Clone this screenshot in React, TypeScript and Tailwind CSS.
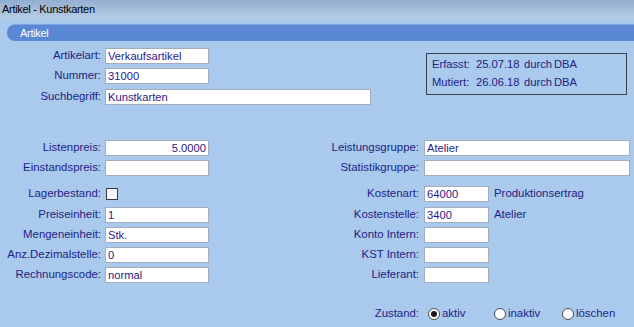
import type { ReactNode } from 'react';

const font = { fontFamily: '"Liberation Sans", Arial, sans-serif' };

function Field({ value = '', w, right = false }: { value?: string; w: string; right?: boolean }) {
    return (
        <div
            className={`${w} h-[16px] bg-white border border-[#a3adbd] px-[2px] text-[11.2px] leading-[14px] text-[#2c1a86] whitespace-nowrap overflow-hidden ${right ? 'text-right' : ''}`}
        >
            {value}
        </div>
    );
}

function Row({ label, lw, gap, children, mt }: { label: string; lw: string; gap: string; children: ReactNode; mt: string }) {
    return (
        <div className={`flex items-center h-[16px] ${mt}`}>
            <div className={`${lw} ${gap} text-right text-[11.4px] text-[#1d2383] whitespace-nowrap`}>{label}</div>
            {children}
        </div>
    );
}

function Radio({ checked = false, label }: { checked?: boolean; label: string }) {
    return (
        <div className="flex items-center">
            <span className="w-[12px] h-[12px] rounded-full bg-white border border-[#4a4a4a] flex items-center justify-center">
                {checked && <span className="w-[6px] h-[6px] rounded-full bg-[#1a1a1a]" />}
            </span>
            <span className="ml-[2px] text-[11.4px] text-[#1d2383]">{label}</span>
        </div>
    );
}

export default function App() {
    return (
        <div className="w-[634px] h-[327px] bg-[#a9c9ed] overflow-hidden" style={font}>
            <div className="h-[19px] bg-gradient-to-b from-[#93aed0] to-[#b6cde6] px-[2px] flex items-center">
                <span className="text-[11px] tracking-[-0.3px] text-black">Artikel - Kunstkarten</span>
            </div>

            <div className="mt-[5px] ml-[7px] -mr-[10px] h-[17px] bg-[#5b88d4] border-t border-[#7fa3e0] rounded-l-[8px] flex items-center pl-[13px]">
                <span className="text-[11px] tracking-[-0.3px] text-white">Artikel</span>
            </div>

            <div className="flex">
                <div className="flex flex-col w-[426px]">
                    <Row label="Artikelart:" lw="w-[101px]" gap="mr-[4px]" mt="mt-[7px]">
                        <Field value="Verkaufsartikel" w="w-[104px]" />
                    </Row>
                    <Row label="Nummer:" lw="w-[101px]" gap="mr-[4px]" mt="mt-[4px]">
                        <Field value="31000" w="w-[104px]" />
                    </Row>
                    <Row label="Suchbegriff:" lw="w-[101px]" gap="mr-[4px]" mt="mt-[5px]">
                        <Field value="Kunstkarten" w="w-[266px]" />
                    </Row>
                </div>
                <div className="mt-[12px] w-[201px] h-[42px] border border-[#3c3f4e] pl-[5px] pt-[1px] text-[11.2px] text-[#1d2383] leading-[18px]">
                    <div className="flex">
                        <span className="w-[44px]">Erfasst:</span>
                        <span className="w-[48px]">25.07.18</span>
                        <span className="w-[30px]">durch</span>
                        <span>DBA</span>
                    </div>
                    <div className="flex">
                        <span className="w-[44px]">Mutiert:</span>
                        <span className="w-[48px]">26.06.18</span>
                        <span className="w-[30px]">durch</span>
                        <span>DBA</span>
                    </div>
                </div>
            </div>

            <div className="flex mt-[35px]">
                <div className="flex flex-col w-[320px]">
                    <Row label="Listenpreis:" lw="w-[101px]" gap="mr-[4px]" mt="">
                        <Field value="5.0000" w="w-[104px]" right />
                    </Row>
                    <Row label="Einstandspreis:" lw="w-[101px]" gap="mr-[4px]" mt="mt-[4px]">
                        <Field w="w-[104px]" />
                    </Row>
                    <Row label="Lagerbestand:" lw="w-[101px]" gap="mr-[5px]" mt="mt-[10px]">
                        <span className="w-[12px] h-[12px] bg-[#f4f7fb] border border-[#3a3a3a]" />
                    </Row>
                    <Row label="Preiseinheit:" lw="w-[101px]" gap="mr-[4px]" mt="mt-[5px]">
                        <Field value="1" w="w-[104px]" />
                    </Row>
                    <Row label="Mengeneinheit:" lw="w-[101px]" gap="mr-[4px]" mt="mt-[4px]">
                        <Field value="Stk." w="w-[104px]" />
                    </Row>
                    <Row label="Anz.Dezimalstelle:" lw="w-[101px]" gap="mr-[4px]" mt="mt-[4px]">
                        <Field value="0" w="w-[104px]" />
                    </Row>
                    <Row label="Rechnungscode:" lw="w-[101px]" gap="mr-[4px]" mt="mt-[4px]">
                        <Field value="normal" w="w-[104px]" />
                    </Row>
                </div>
                <div className="flex flex-col">
                    <Row label="Leistungsgruppe:" lw="w-[99px]" gap="mr-[5px]" mt="">
                        <Field value="Atelier" w="w-[206px]" />
                    </Row>
                    <Row label="Statistikgruppe:" lw="w-[99px]" gap="mr-[5px]" mt="mt-[4px]">
                        <Field w="w-[206px]" />
                    </Row>
                    <Row label="Kostenart:" lw="w-[99px]" gap="mr-[5px]" mt="mt-[10px]">
                        <Field value="64000" w="w-[65px]" />
                        <span className="ml-[5px] text-[11.4px] text-[#1d2383]">Produktionsertrag</span>
                    </Row>
                    <Row label="Kostenstelle:" lw="w-[99px]" gap="mr-[5px]" mt="mt-[5px]">
                        <Field value="3400" w="w-[65px]" />
                        <span className="ml-[5px] text-[11.4px] text-[#1d2383]">Atelier</span>
                    </Row>
                    <Row label="Konto Intern:" lw="w-[99px]" gap="mr-[5px]" mt="mt-[4px]">
                        <Field w="w-[65px]" />
                    </Row>
                    <Row label="KST Intern:" lw="w-[99px]" gap="mr-[5px]" mt="mt-[4px]">
                        <Field w="w-[65px]" />
                    </Row>
                    <Row label="Lieferant:" lw="w-[99px]" gap="mr-[5px]" mt="mt-[4px]">
                        <Field w="w-[65px]" />
                    </Row>
                    <Row label="Zustand:" lw="w-[99px]" gap="mr-[9px]" mt="mt-[23px]">
                        <div className="w-[66px]"><Radio checked label="aktiv" /></div>
                        <div className="w-[68px]"><Radio label="inaktiv" /></div>
                        <Radio label="löschen" />
                    </Row>
                </div>
            </div>
        </div>
    );
}
